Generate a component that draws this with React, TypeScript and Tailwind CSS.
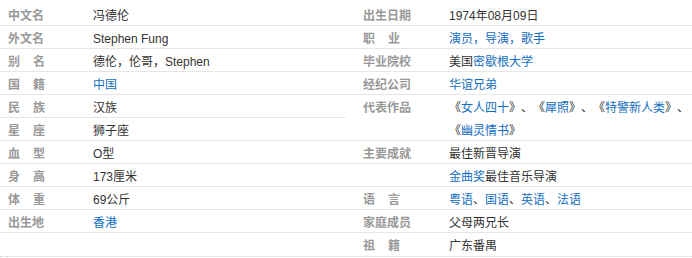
import React from "react";

const blue = "text-[#136ec2]";

type Row = { label: string; value: React.ReactNode; double?: boolean; last?: boolean };

function Label({ text }: { text: string }) {
  if (text.length === 2) {
    return (
      <span className="flex w-[37px] justify-between">
        <span>{text[0]}</span>
        <span>{text[1]}</span>
      </span>
    );
  }
  return <span>{text}</span>;
}

const A = ({ children }: { children: React.ReactNode }) => <span className={blue}>{children}</span>;

const left: Row[] = [
  { label: "中文名", value: "冯德伦" },
  { label: "外文名", value: "Stephen Fung" },
  { label: "别名", value: "德伦，伦哥，Stephen" },
  { label: "国籍", value: <A>中国</A> },
  { label: "民族", value: "汉族" },
  { label: "星座", value: "狮子座" },
  { label: "血型", value: "O型" },
  { label: "身高", value: "173厘米" },
  { label: "体重", value: "69公斤" },
  { label: "出生地", value: <A>香港</A> },
];

const right: Row[] = [
  { label: "出生日期", value: "1974年08月09日" },
  { label: "职业", value: <A>演员，导演，歌手</A> },
  { label: "毕业院校", value: <>美国<A>密歇根大学</A></> },
  { label: "经纪公司", value: <A>华谊兄弟</A> },
  {
    label: "代表作品",
    double: true,
    value: (
      <>
        <span className="block whitespace-nowrap">
          《<A>女人四十</A>》、《<A>犀照</A>》、《<A>特警新人类</A>》、
        </span>
        <span className="block whitespace-nowrap">
          《<A>幽灵情书</A>》
        </span>
      </>
    ),
  },
  { label: "主要成就", value: "最佳新晋导演" },
  { label: "", value: <><A>金曲奖</A>最佳音乐导演</> },
  { label: "语言", value: <><A>粤语</A>、<A>国语</A>、<A>英语</A>、<A>法语</A></> },
  { label: "家庭成员", value: "父母两兄长" },
  { label: "祖籍", value: "广东番禺", last: true },
];

function Column({ rows, labelW, labelPl }: { rows: Row[]; labelW: string; labelPl: string }) {
  return (
    <div className="flex flex-col">
      {rows.map((r, i) => (
        <div
          key={i}
          className={
            "flex " +
            (r.double ? "h-[46px] items-start pt-[2px] " : "h-[23px] items-center pt-[3px] ") +
            (r.last ? "" : "border-b border-[#e6e6e6]")
          }
        >
          <div
            className={
              "shrink-0 font-bold text-[#999] " + labelW + " " + labelPl + (r.double ? " leading-[23px]" : "")
            }
          >
            <Label text={r.label} />
          </div>
          <div className={"text-[#333] whitespace-nowrap" + (r.double ? " leading-[23px]" : "")}>{r.value}</div>
        </div>
      ))}
    </div>
  );
}

export default function App() {
  return (
    <div
      className="w-[692px] h-[258px] bg-white text-[12px] leading-[18px] [text-spacing-trim:space-all]"
      style={{ fontFamily: '"Liberation Sans", Arial, "Noto Sans CJK SC", sans-serif' }}
    >
      <div className="flex pt-[3px] border-b border-dotted border-[#cfcfcf]">
        <div className="w-[346px]">
          <Column rows={left} labelW="w-[93px]" labelPl="pl-[8px]" />
        </div>
        <div className="flex-1">
          <Column rows={right} labelW="w-[103px]" labelPl="pl-[17px]" />
        </div>
      </div>
    </div>
  );
}
